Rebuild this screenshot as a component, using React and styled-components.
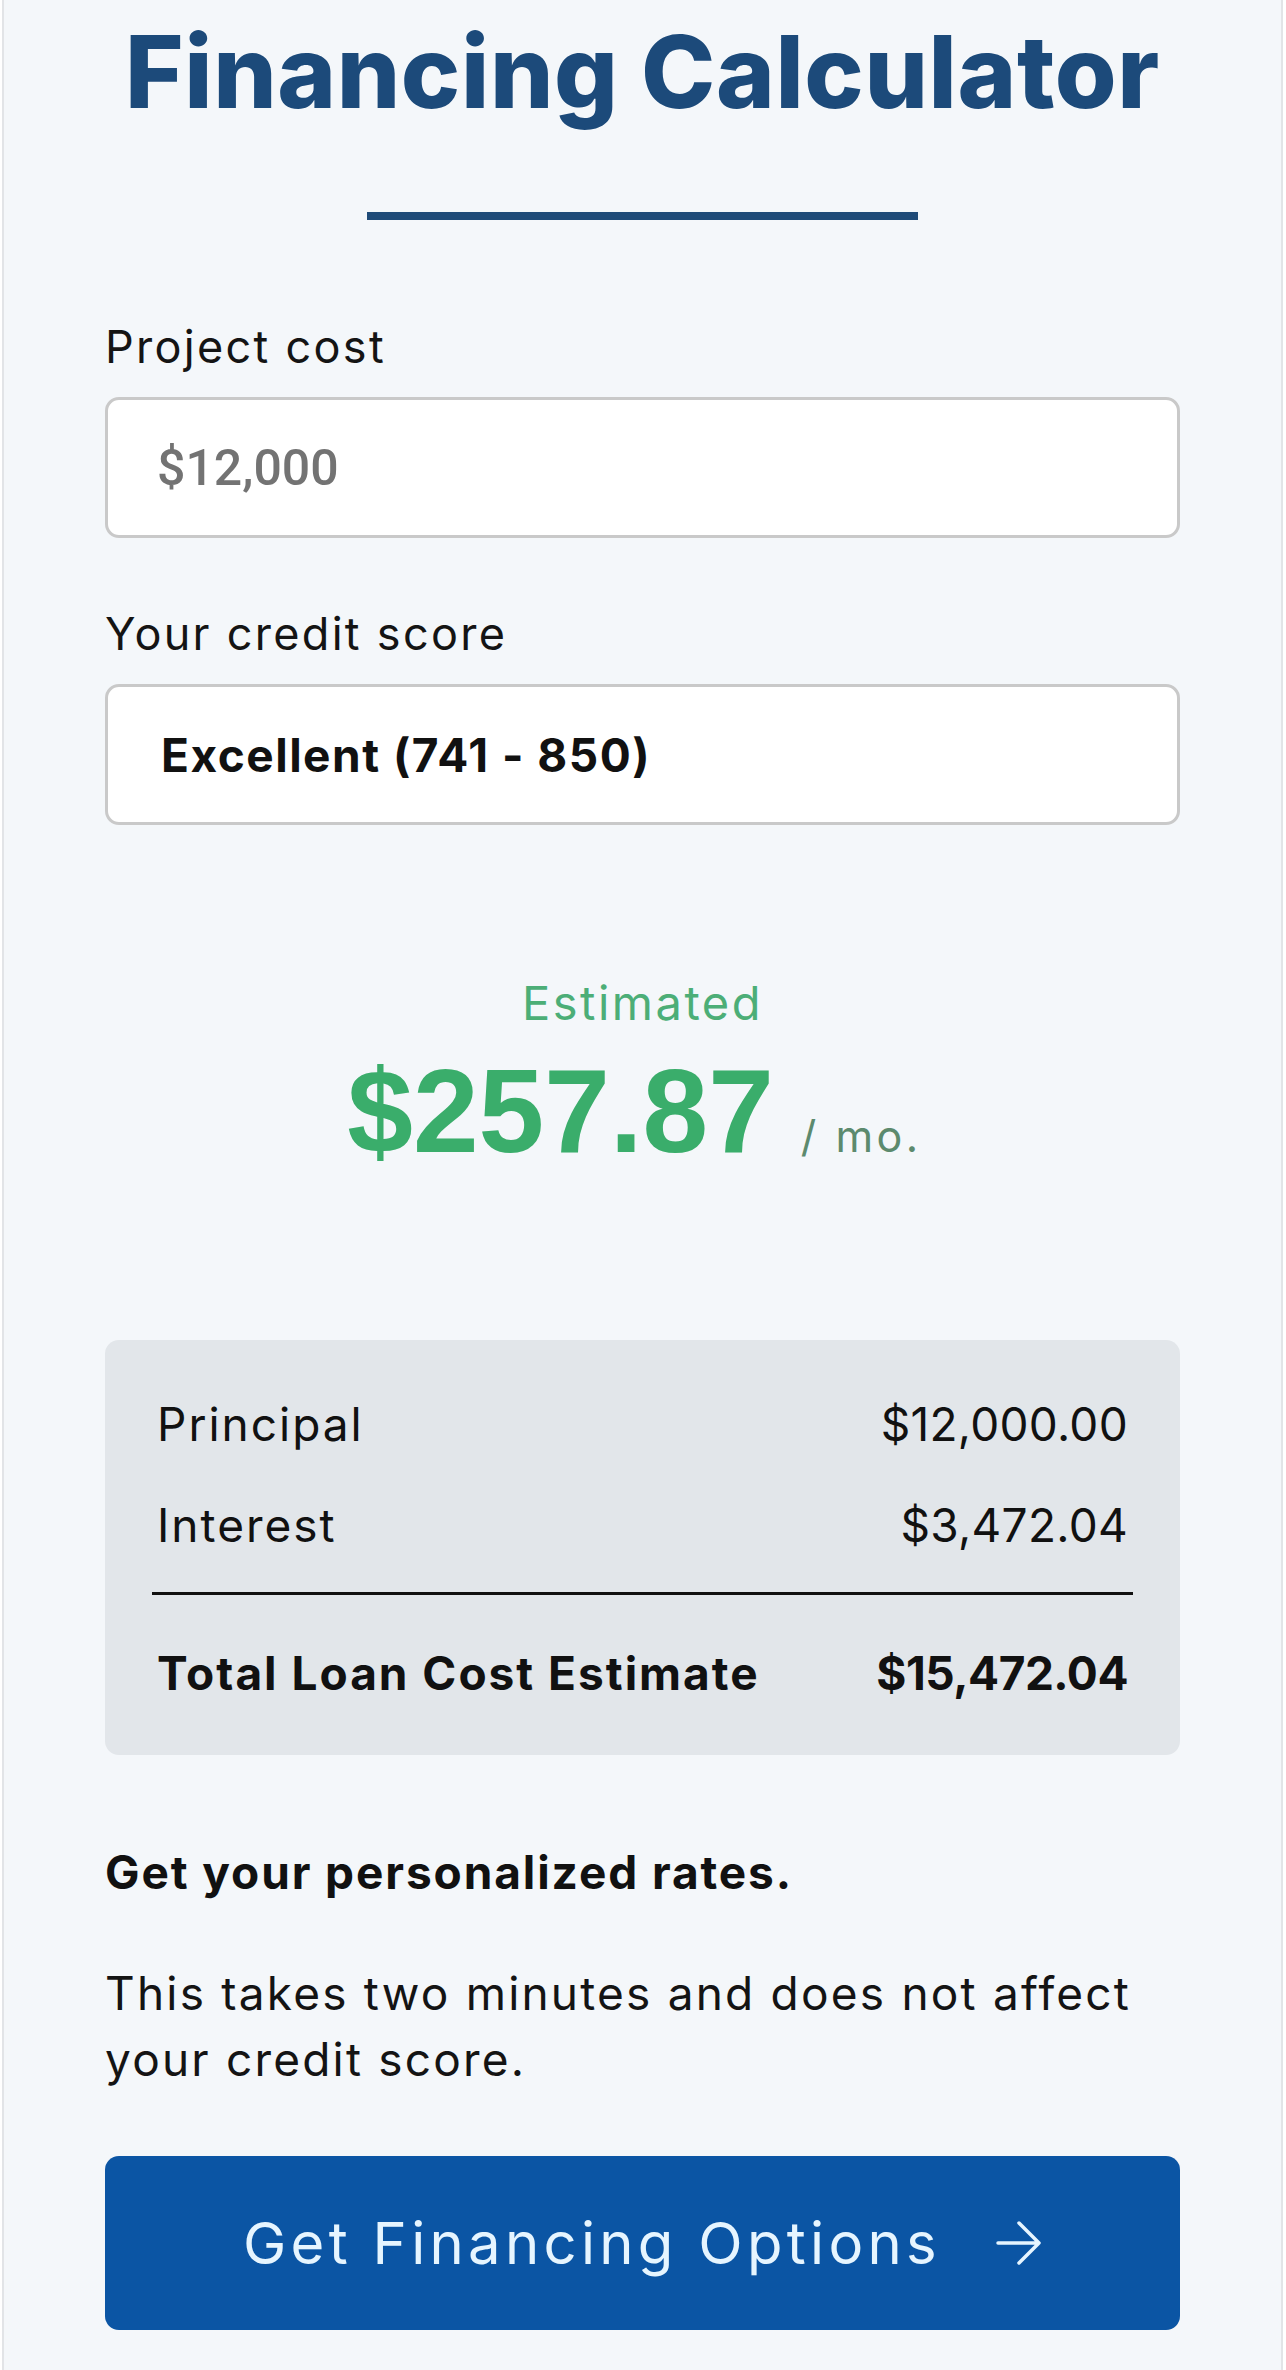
import React from "react";
import styled, { createGlobalStyle } from "styled-components";

const Global = createGlobalStyle`
  html, body { margin: 0; padding: 0; background: #ffffff; }
  body { font-family: "Inter", "Liberation Sans", sans-serif; color: #111; }
  * { box-sizing: border-box; }
`;

const Page = styled.div`
  margin: 0 3px 0 2px;
  min-height: 2370px;
  background: #f4f7fa;
  border-left: 2px solid #e2e4e7;
  border-right: 2px solid #e2e4e7;
  padding: 22px 101px 0 101px;
  display: flex;
  flex-direction: column;
`;

const Title = styled.h1`
  margin: 0;
  text-align: center;
  font-family: "Inter", sans-serif;
  font-weight: 800;
  font-size: 100px;
  line-height: 1;
  color: #1c4a7a;
  letter-spacing: 0.6px;
`;

const Bar = styled.div`
  align-self: center;
  width: 551px;
  height: 8px;
  margin-top: 90px;
  background: #1f4b78;
`;

const Label = styled.label`
  display: block;
  margin-top: ${(p) => p.$mt}px;
  font-size: 45px;
  line-height: 1.2;
  letter-spacing: 2.3px;
  color: #141414;
`;

const Field = styled.div`
  margin-top: 23px;
  height: 141px;
  background: #ffffff;
  border: 3px solid #c9c9c9;
  border-radius: 14px;
  display: flex;
  align-items: center;
  padding-left: ${(p) => p.$pl}px;
  font-family: ${(p) => (p.$muted ? '"Roboto", sans-serif' : '"Inter", sans-serif')};
  font-weight: ${(p) => (p.$muted ? 500 : 700)};
  font-size: ${(p) => (p.$muted ? 50 : 46)}px;
  letter-spacing: ${(p) => (p.$muted ? 0 : 1.5)}px;
  color: ${(p) => (p.$muted ? "#737373" : "#111111")};
`;

const Estimated = styled.div`
  margin-top: 150px;
  text-align: center;
  font-size: 47px;
  line-height: 1.2;
  letter-spacing: 2.5px;
  color: #4cae77;
`;

const AmountRow = styled.div`
  margin-top: 21px;
  padding-right: 16px;
  text-align: center;
  line-height: 1;
`;

const Amount = styled.span`
  font-family: "Liberation Sans", Arial, sans-serif;
  font-weight: 700;
  font-size: 118px;
  color: #3aad6b;
`;

const Per = styled.span`
  margin-left: 27px;
  font-size: 43px;
  letter-spacing: 3.5px;
  color: #5c8a6e;
`;

const Summary = styled.div`
  margin-top: 170px;
  background: #e2e6ea;
  border-radius: 14px;
  padding: 57px 52px 54px 52px;
  display: flex;
  flex-direction: column;
`;

const Row = styled.div`
  display: flex;
  justify-content: space-between;
  margin-top: ${(p) => p.$mt || 0}px;
  font-size: 46px;
  line-height: 1.2;
  font-weight: ${(p) => (p.$bold ? 700 : 400)};
  color: #111;
`;

const RowLabel = styled.span`
  letter-spacing: 2px;
`;

const RowValue = styled.span`
  letter-spacing: ${(p) => (p.$tight ? -0.5 : 0.3)}px;
`;

const Divider = styled.div`
  margin: 39px -5px 0 -5px;
  height: 3px;
  background: #111;
`;

const Heading = styled.div`
  margin-top: 90px;
  font-size: 46px;
  line-height: 1.2;
  font-weight: 700;
  letter-spacing: 1.9px;
  color: #111;
`;

const Para = styled.p`
  margin: 60px 0 0 0;
  font-size: 46px;
  line-height: 66px;
  letter-spacing: 2.2px;
  color: #141414;
`;

const Button = styled.button`
  margin-top: 64px;
  height: 174px;
  border: none;
  border-radius: 14px;
  background: #0b55a4;
  color: #e6f5ff;
  font-family: "Inter", sans-serif;
  font-size: 58px;
  font-weight: 400;
  letter-spacing: 4.3px;
  display: flex;
  align-items: center;
  justify-content: center;
  gap: 55px;
`;

const Arrow = () => (
  <svg width="46" height="46" viewBox="0 0 46 46" fill="none">
    <path d="M2 23 H43 M23 3 L43 23 L23 43" stroke="#e6f5ff" strokeWidth="3.5" strokeLinecap="round" strokeLinejoin="round" />
  </svg>
);

export default function App() {
  return (
    <>
      <Global />
      <Page>
        <Title>Financing Calculator</Title>
        <Bar />
        <Label $mt={100}>Project cost</Label>
        <Field $muted $pl={49}>$12,000</Field>
        <Label $mt={69}>Your credit score</Label>
        <Field $pl={53}>Excellent (741 - 850)</Field>
        <Estimated>Estimated</Estimated>
        <AmountRow>
          <Amount>$257.87</Amount>
          <Per>/ mo.</Per>
        </AmountRow>
        <Summary>
          <Row>
            <RowLabel>Principal</RowLabel>
            <RowValue>$12,000.00</RowValue>
          </Row>
          <Row $mt={45}>
            <RowLabel>Interest</RowLabel>
            <RowValue>$3,472.04</RowValue>
          </Row>
          <Divider />
          <Row $bold $mt={51}>
            <RowLabel>Total Loan Cost Estimate</RowLabel>
            <RowValue $tight>$15,472.04</RowValue>
          </Row>
        </Summary>
        <Heading>Get your personalized rates.</Heading>
        <Para>
          This takes two minutes and does not affect
          <br />
          your credit score.
        </Para>
        <Button>
          <span>Get Financing Options</span>
          <Arrow />
        </Button>
      </Page>
    </>
  );
}
